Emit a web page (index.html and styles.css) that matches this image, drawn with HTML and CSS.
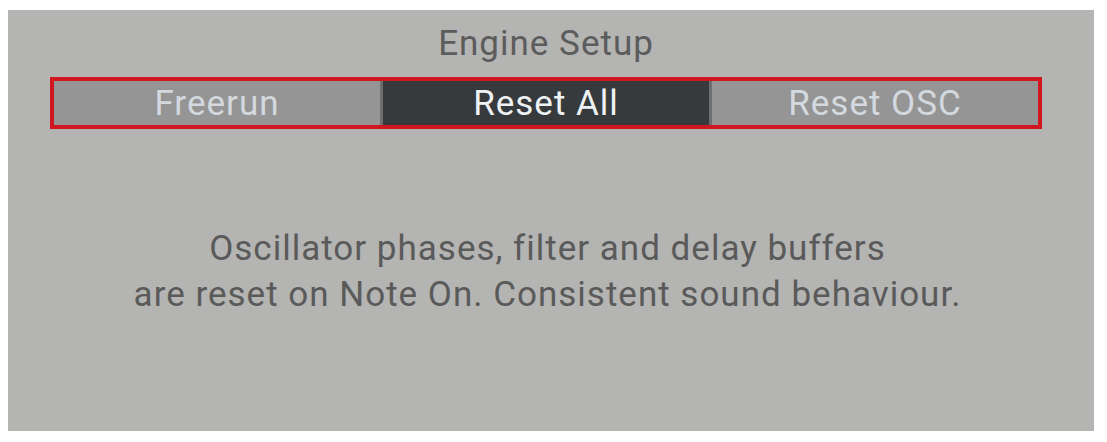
FILE: index.html
```html
<!DOCTYPE html>
<html>
<head>
<meta charset="utf-8">
<link rel="stylesheet" href="styles.css">
</head>
<body>
<div class="panel">
  <div class="title">Engine Setup</div>
  <div class="tabs">
    <div class="tab">Freerun</div>
    <div class="tab active">Reset All</div>
    <div class="tab">Reset OSC</div>
  </div>
  <div class="desc">
    Oscillator phases, filter and delay buffers<br>
    are reset on Note On. Consistent sound behaviour.
  </div>
</div>
</body>
</html>
```
FILE: styles.css
```css
html, body {
  margin: 0;
  padding: 0;
  background: #ffffff;
}
body {
  padding: 10px 13px 11px 8px;
  font-family: Roboto, "Liberation Sans", sans-serif;
}
.panel {
  background: #b4b4b2;
  height: 421px;
  box-sizing: border-box;
  padding: 14px 52px 0 42px;
}
.title {
  text-align: center;
  font-size: 35px;
  letter-spacing: 1px;
  line-height: 40px;
  color: #5c5c5c;
}
.tabs {
  margin-top: 13px;
  display: flex;
  gap: 3px;
  border: 4px solid #d0161e;
  background: #6e6e6e;
  height: 44px;
}
.tab {
  flex: 1;
  background: #959595;
  color: #d3d9de;
  font-size: 35px;
  letter-spacing: 1px;
  line-height: 45px;
  text-align: center;
}
.tab.active {
  background: #373a3d;
  color: #eef2f4;
}
.desc {
  margin-top: 97px;
  padding-left: 3px;
  text-align: center;
  font-size: 35px;
  letter-spacing: 1px;
  line-height: 46px;
  color: #5a5a5a;
}
```
